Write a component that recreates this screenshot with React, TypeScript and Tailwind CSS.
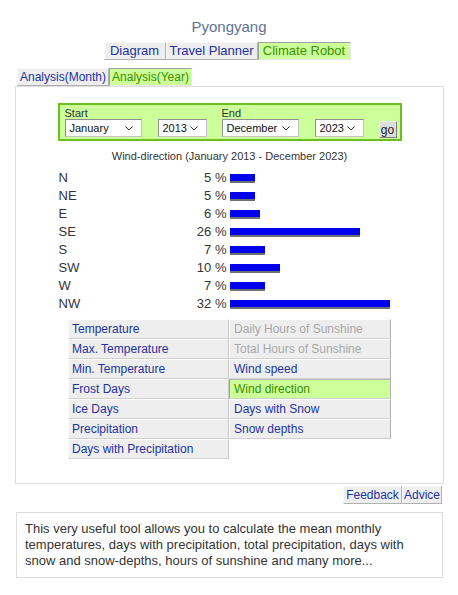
import React from 'react';

const winds: [string, number][] = [
  ['N', 5],
  ['NE', 5],
  ['E', 6],
  ['SE', 26],
  ['S', 7],
  ['SW', 10],
  ['W', 7],
  ['NW', 32],
];

type Item = { label: string; state?: 'off' | 'on' };

const leftItems: Item[] = [
  { label: 'Temperature' },
  { label: 'Max. Temperature' },
  { label: 'Min. Temperature' },
  { label: 'Frost Days' },
  { label: 'Ice Days' },
  { label: 'Precipitation' },
  { label: 'Days with Precipitation' },
];

const rightItems: (Item | null)[] = [
  { label: 'Daily Hours of Sunshine', state: 'off' },
  { label: 'Total Hours of Sunshine', state: 'off' },
  { label: 'Wind speed' },
  { label: 'Wind direction', state: 'on' },
  { label: 'Days with Snow' },
  { label: 'Snow depths' },
  null,
];

const Chevron = () => (
  <svg width="8" height="5" viewBox="0 0 8 5" className="shrink-0">
    <polyline points="0.5,0.5 4,4 7.5,0.5" fill="none" stroke="#333" strokeWidth="1" />
  </svg>
);

const FakeSelect = ({ value, width }: { value: string; width: string }) => (
  <div
    className={`${width} h-[18px] flex items-center justify-between bg-white border border-[#8f8f8f] border-b-[#c4c4c4] border-r-[#c4c4c4] pl-[4px] pr-[8px] text-[11px] text-[#111]`}
  >
    <span>{value}</span>
    <Chevron />
  </div>
);

const Tab = ({ label, active, className = '' }: { label: string; active?: boolean; className?: string }) => (
  <div
    className={`h-[18px] flex items-center justify-center border ${
      active
        ? 'bg-[#ccff99] text-[#3a8f00] border-t-[#a0a0a0] border-l-[#a0a0a0] border-b-[#e8e8e8] border-r-[#e8e8e8]'
        : 'bg-[#eeeeee] text-[#2233a0] border-t-[#f8f8f8] border-l-[#f8f8f8] border-b-[#b0b0b0] border-r-[#b0b0b0]'
    } ${className}`}
  >
    {label}
  </div>
);

const Cell = ({ item, right }: { item: Item | null; right?: boolean }) => {
  if (!item) return <div className="h-[20px]" />;
  const bg =
    item.state === 'on'
      ? 'bg-[#ccff99] text-[#3a8f00] border-l-[#a0a0a0] border-t-[#b8b8b8]'
      : `bg-[#eeeeee] ${item.state === 'off' ? 'text-[#a8a8a8]' : 'text-[#2233a0]'} border-l-white border-t-white`;
  return (
    <div
      className={`h-[20px] flex items-center border border-b-[#d0d0d0] ${
        right ? 'border-r-[#b0b0b0] pl-[4px]' : 'border-r-[#c8c8c8] pl-[3px]'
      } ${bg} text-[12px]`}
    >
      {item.label}
    </div>
  );
};

export default function App() {
  return (
    <div
      className="w-[458px] min-h-[595px] bg-white pt-[18px] text-[#333]"
      style={{ fontFamily: '"Liberation Sans", Arial, sans-serif' }}
    >
      <div className="text-center text-[15px] leading-[18px] text-[#5f7291]">Pyongyang</div>

      <div className="mt-[6px] flex justify-center text-[13px] pr-[4px]">
        <Tab label="Diagram" className="w-[62px]" />
        <Tab label="Travel Planner" className="w-[92px]" />
        <Tab label="Climate Robot" active className="w-[93px]" />
      </div>

      <div className="mt-[8px] ml-[17px] flex text-[12px]">
        <Tab label="Analysis(Month)" className="w-[92px]" />
        <Tab label="Analysis(Year)" active className="w-[83px]" />
      </div>

      <div className="mx-[14px] ml-[15px] border border-[#dddddd] pt-[16px] pb-[24px]">
        <div className="mx-auto w-[344px] h-[38px] bg-[#ccff99] border-2 border-[#6cbf1f] pl-[5px] flex gap-[15px] text-[11px]">
          <div className="flex flex-col">
            <div className="h-[14px] leading-[14px] pt-[1px] text-[#333]">Start</div>
            <div className="flex gap-[16px]">
              <FakeSelect value="January" width="w-[77px]" />
              <FakeSelect value="2013" width="w-[49px]" />
            </div>
          </div>
          <div className="flex flex-col">
            <div className="h-[14px] leading-[14px] pt-[1px] text-[#333]">End</div>
            <div className="flex gap-[16px]">
              <FakeSelect value="December" width="w-[77px]" />
              <FakeSelect value="2023" width="w-[49px]" />
            </div>
          </div>
          <div className="flex items-end pb-[1px]">
            <button className="w-[18px] h-[17px] flex items-center justify-center bg-[#dddddd] border border-t-[#f0f0f0] border-l-[#f0f0f0] border-b-[#808080] border-r-[#808080] text-[12px] leading-none text-[#222]">
              go
            </button>
          </div>
        </div>

        <div className="mt-[8px] text-center text-[11px] leading-[14px] text-[#333]">
          Wind-direction (January 2013 - December 2023)
        </div>

        <div className="mt-[6px] mx-auto w-[342px] flex flex-col">
          {winds.map(([dir, pct]) => (
            <div key={dir} className="h-[18px] flex items-center text-[13px]">
              <div className="w-[168px] flex justify-between">
                <span>{dir}</span>
                <span>{pct} %</span>
              </div>
              <div
                className="ml-[3px] h-[9px] bg-[#0000ee] border-b-2 border-b-[#6f6f6f]"
                style={{ width: pct * 5 }}
              />
            </div>
          ))}
        </div>

        <div className="mt-[6px] mx-auto w-[323px] grid grid-cols-[161px_162px]">
          {leftItems.map((item, i) => (
            <React.Fragment key={item.label}>
              <Cell item={item} />
              <Cell item={rightItems[i]} right />
            </React.Fragment>
          ))}
        </div>
      </div>

      <div className="mt-[2px] mr-[16px] flex justify-end text-[12px]">
        <Tab label="Feedback" className="w-[59px] h-[16px]" />
        <Tab label="Advice" className="w-[40px] h-[16px]" />
      </div>

      <div className="mt-[8px] ml-[16px] w-[427px] border border-[#dddddd] px-[8px] py-[8px] text-[13px] leading-[16px] text-[#333]">
        This very useful tool allows you to calculate the mean monthly temperatures, days with
        precipitation, total precipitation, days with snow and snow-depths, hours of sunshine and
        many more...
      </div>
    </div>
  );
}
